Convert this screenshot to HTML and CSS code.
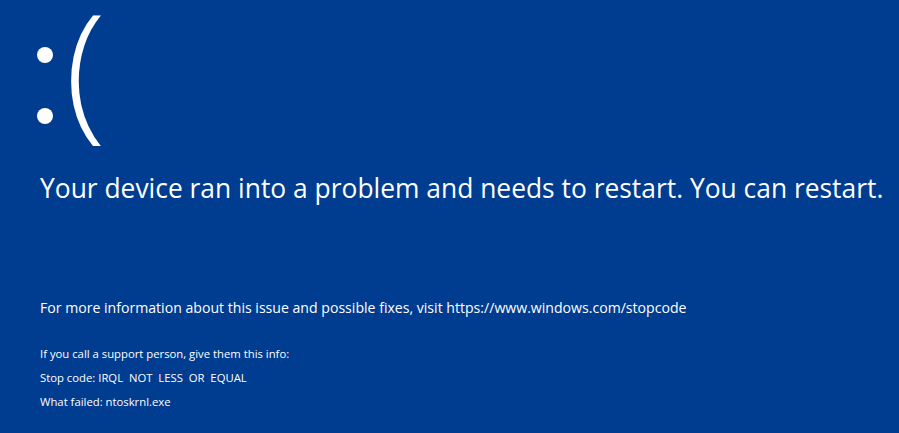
FILE: index.html
```html
<!DOCTYPE html>
<html lang="en">
<head>
  <meta charset="UTF-8">
  <meta name="viewport" content="width=device-width, initial-scale=1.0">
  <title>Stop code</title>
  <link rel="stylesheet" href="styles.css">
</head>
<body>
  <div class="screen">
    <div class="face" aria-label=":(">
      <span class="colon"><span class="dot"></span><span class="dot"></span></span>
      <span class="paren">(</span>
    </div>
    <h1 class="headline">Your device ran into a problem and needs to restart. You can restart.</h1>
    <p class="more">For more information about this issue and possible fixes, visit https://www.windows.com/stopcode</p>
    <div class="details">
      <p>If you call a support person, give them this info:</p>
      <p>Stop code: IRQL&nbsp; NOT&nbsp; LESS&nbsp; OR&nbsp; EQUAL</p>
      <p>What failed: ntoskrnl.exe</p>
    </div>
  </div>
</body>
</html>
```

FILE: styles.css
```css
html, body {
  margin: 0;
  height: 100%;
  background: #003c8f;
}
.screen {
  font-family: "Open Sans", "Noto Sans", sans-serif;
  color: #fff;
  padding: 0 0 0 37px;
  height: 100%;
  box-sizing: border-box;
  overflow: hidden;
}
.face {
  display: flex;
  align-items: flex-start;
  height: 150px;
}
.colon {
  display: flex;
  flex-direction: column;
  gap: 45px;
  margin-top: 47px;
}
.dot {
  width: 16px;
  height: 16px;
  border-radius: 50%;
  background: #fff;
}
.paren {
  font-size: 150px;
  font-weight: 300;
  line-height: 0.85;
  padding-bottom: 20px;
  margin: 1px 0 0 12px;
}
.headline {
  font-size: 26.4px;
  font-weight: 400;
  margin: 20px 0 0 3px;
  white-space: nowrap;
}
.more {
  font-size: 14.1px;
  margin: 92px 0 0 3px;
}
.details {
  margin: 25px 0 0 3px;
  font-size: 11.3px;
}
.details p {
  margin: 0;
  line-height: 24px;
}
```
